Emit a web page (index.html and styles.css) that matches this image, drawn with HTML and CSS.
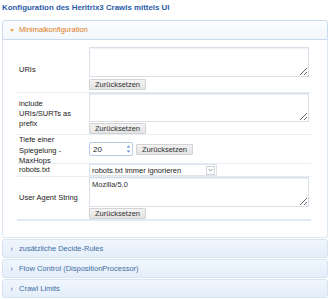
FILE: index.html
```html
<!DOCTYPE html>
<html lang="de">
<head>
    <meta charset="UTF-8">
    <title>Heritrix3 Konfiguration</title>
    <link rel="stylesheet" href="styles.css">
</head>
<body>

<h1 class="title">Konfiguration des Heritrix3 Crawls mittels UI</h1>

<div class="accordion">
    <div class="acc-head active"><span class="arrow down"></span>Minimalkonfiguration</div>
    <div class="acc-panel">
        <table class="form">
            <tr class="r-uris">
                <td class="label">URIs</td>
                <td class="field">
                    <textarea class="area"></textarea>
                    <button class="reset">Zurücksetzen</button>
                </td>
            </tr>
            <tr class="r-prefix">
                <td class="label">include URIs/SURTs as prefix</td>
                <td class="field">
                    <textarea class="area"></textarea>
                    <button class="reset">Zurücksetzen</button>
                </td>
            </tr>
            <tr class="r-hops">
                <td class="label"><div class="tight">Tiefe einer Spiegelung - MaxHops</div></td>
                <td class="field">
                    <div class="inline">
                        <div class="number"><span>20</span><span class="spin"><svg width="5" height="10" viewBox="0 0 5 10"><path d="M0.5 3.5 L2.5 1.5 L4.5 3.5 Z M0.5 6.5 L2.5 8.5 L4.5 6.5 Z" fill="#5b8fd6"/></svg></span></div>
                        <button class="reset">Zurücksetzen</button>
                    </div>
                </td>
            </tr>
            <tr class="r-robots">
                <td class="label">robots.txt</td>
                <td class="field">
                    <div class="select"><span>robots.txt immer ignorieren</span><span class="sel-btn"><svg width="5" height="4" viewBox="0 0 5 4"><path d="M0.5 1 L2.5 3 L4.5 1" fill="none" stroke="#777" stroke-width="0.8"/></svg></span></div>
                </td>
            </tr>
            <tr class="last">
                <td class="label">User Agent String</td>
                <td class="field">
                    <textarea class="area">Mozilla/5.0</textarea>
                    <button class="reset">Zurücksetzen</button>
                </td>
            </tr>
        </table>
    </div>
    <div class="acc-head"><span class="arrow right"></span>zusätzliche Decide-Rules</div>
    <div class="acc-head"><span class="arrow right"></span>Flow Control (DispositionProcessor)</div>
    <div class="acc-head"><span class="arrow right"></span>Crawl Limits</div>
</div>

</body>
</html>
```

FILE: styles.css
```css
body {
    margin: 0;
    padding: 3px 1px 0 2px;
    font-family: "Liberation Sans", Arial, sans-serif;
    font-size: 7.5px;
    color: #222;
    background-color: #ffffff;
}
.title {
    margin: 0 0 7px 0;
    font-size: 7.9px;
    font-weight: bold;
    color: #2a5ca8;
    line-height: 10px;
}
.accordion {
    width: 326px;
}
.acc-head {
    height: 17px;
    line-height: 17px;
    padding-left: 16px;
    position: relative;
    border: 1px solid #d6e4f2;
    border-radius: 3px;
    background: linear-gradient(#f0f6fd, #e4eefa);
    color: #3f6f9f;
    margin-top: 1px;
}
.acc-head.active {
    height: 18px;
    line-height: 18px;
    margin-top: 0;
    background: linear-gradient(#fbfdff, #f3f7fb);
    border-color: #c9dbee;
    border-radius: 3px 3px 0 0;
    color: #e07a1a;
}
.arrow {
    position: absolute;
    left: 7px;
    top: 8px;
    width: 0;
    height: 0;
}
.arrow.down {
    border-left: 2.5px solid transparent;
    border-right: 2.5px solid transparent;
    border-top: 3px solid #f0a040;
}
.arrow.right {
    top: 6.5px;
    left: 8px;
    border-top: 2px solid transparent;
    border-bottom: 2px solid transparent;
    border-left: 2.5px solid #8fb0d4;
}
.acc-panel {
    border: 1px solid #dde8f3;
    border-top: none;
    border-radius: 0 0 3px 3px;
    padding: 7px 14px 16px 14px;
    background-color: #ffffff;
}
.form {
    width: 294px;
    border-collapse: collapse;
}
.form td {
    border-bottom: 1px solid #e6ecf3;
    padding: 0;
    vertical-align: top;
}
.form tr.last td {
    border-bottom: 2px solid #e3e9f1;
}
.form td.label {
    width: 64px;
    padding: 0 6px 0 2px;
    line-height: 10px;
    vertical-align: middle;
}
.tight {
    line-height: 10.4px;
    margin: 0 0 -4px 0;
}
.area {
    display: block;
    box-sizing: border-box;
    width: 220px;
    height: 30px;
    margin: 0 0 1px 0;
    padding: 2px 2px;
    border: 1px solid #d9dfe8;
    box-shadow: inset 0 1px 1px #eef1f5;
    font-family: "Liberation Sans", Arial, sans-serif;
    font-size: 7.5px;
    color: #333;
    resize: both;
}
.r-uris .area {
    margin-bottom: 2px;
}
.r-uris .reset {
    margin-bottom: 2px;
}
.r-prefix .area {
    height: 29px;
}
.reset {
    display: block;
    height: 11px;
    padding: 0 5px;
    margin: 0;
    border: 1px solid #d3d3d3;
    border-radius: 1px;
    background: linear-gradient(#f3f3f3, #e3e3e3);
    font-family: "Liberation Sans", Arial, sans-serif;
    font-size: 7.5px;
    line-height: 9px;
    color: #333;
}
.inline {
    display: flex;
    align-items: center;
    gap: 3px;
    height: 28px;
}
.number {
    box-sizing: border-box;
    width: 44px;
    height: 14px;
    border: 1px solid #b9cbe3;
    border-radius: 2px;
    display: flex;
    align-items: center;
    justify-content: space-between;
    padding-left: 3px;
    font-size: 8px;
}
.spin {
    width: 8px;
    display: flex;
    justify-content: center;
}
.r-robots td {
    height: 12px;
}
.select {
    box-sizing: border-box;
    width: 128px;
    height: 12px;
    margin: 0;
    border: 1px solid #dfe3ea;
    display: flex;
    align-items: center;
    justify-content: space-between;
    padding-left: 2px;
}
.sel-btn {
    width: 9px;
    height: 9px;
    margin-right: 1px;
    border: 1px solid #cfd4dc;
    box-sizing: border-box;
    display: flex;
    align-items: center;
    justify-content: center;
}
```
